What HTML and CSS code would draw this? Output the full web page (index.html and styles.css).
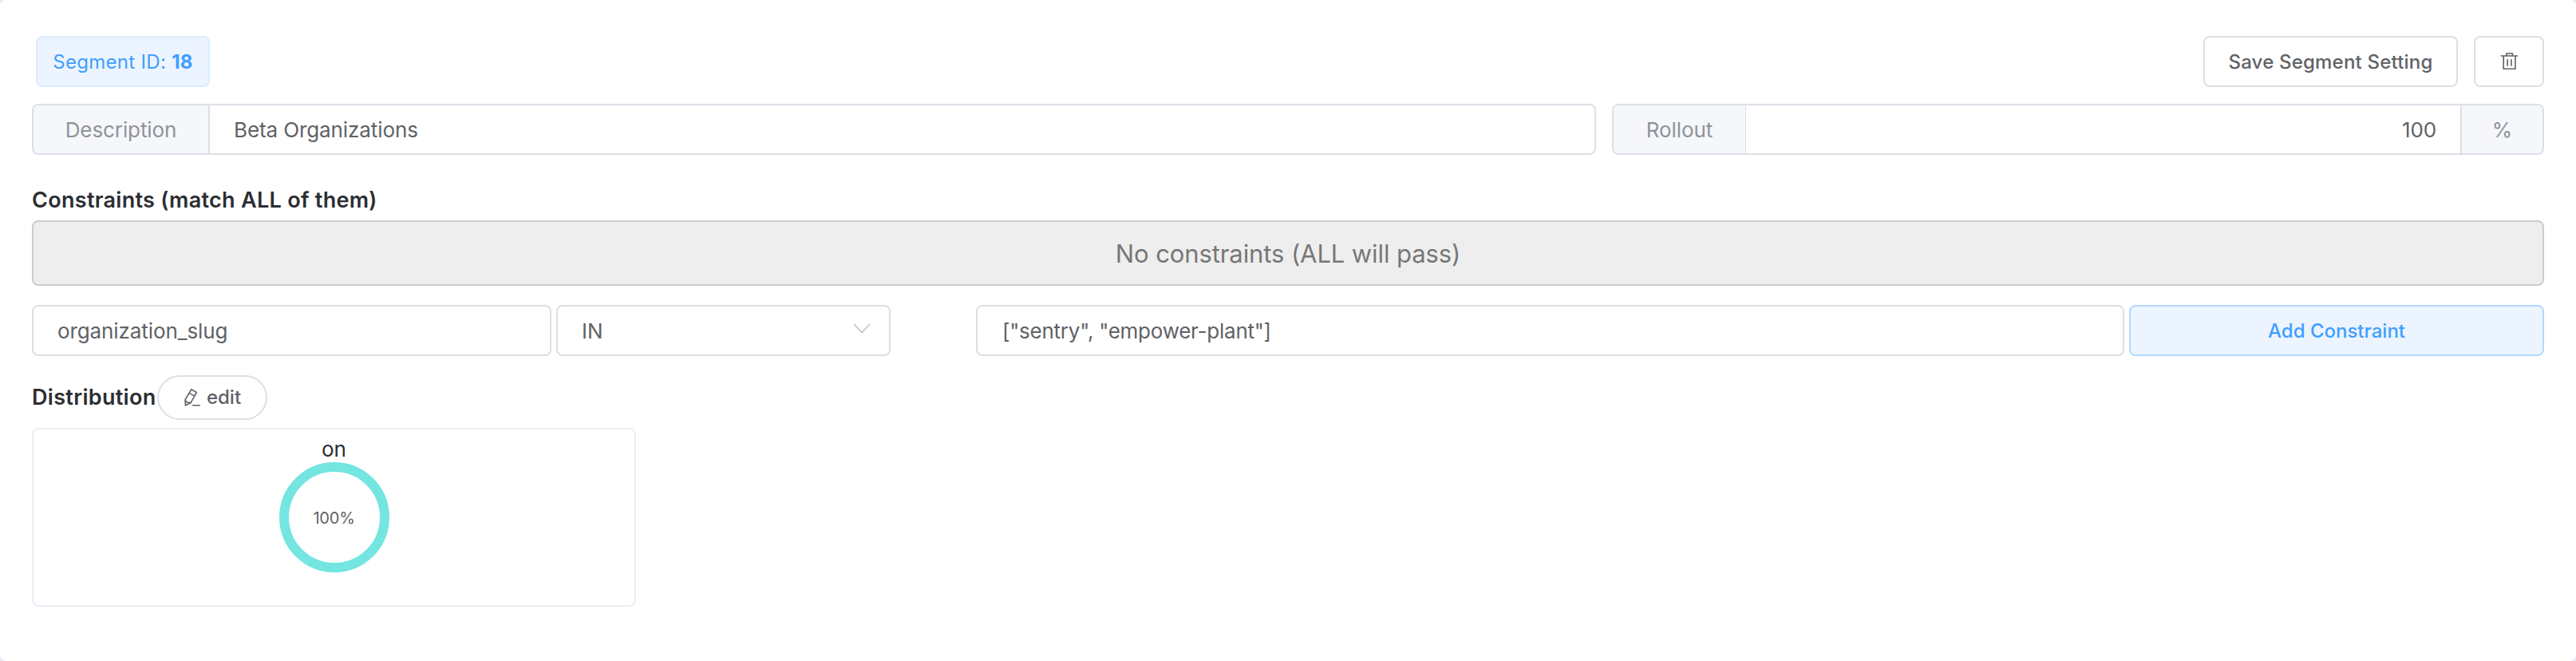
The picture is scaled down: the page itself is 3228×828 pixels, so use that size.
FILE: index.html
```html
<!DOCTYPE html>
<html lang="en">
<head>
<meta charset="utf-8">
<title>Segment</title>
<link rel="stylesheet" href="styles.css">
</head>
<body>
<main class="segment">
  <header class="segment-head">
    <span class="tag"><span>Segment ID: <b>18</b></span></span>
    <div class="actions">
      <button class="btn save">Save Segment Setting</button>
      <button class="btn remove" aria-label="Delete">
        <svg class="icon-trash" viewBox="0 0 24 24"><path d="M1.700 5h21.300M9 5V2h7.400v3M5.200 5v16.300h14.800V5M10.200 9.200v8.600M14.900 9.200v8.600"/></svg>
      </button>
    </div>
  </header>
  <section class="fields">
    <div class="group">
      <label class="addon">Description</label>
      <div class="value">Beta Organizations</div>
    </div>
    <div class="group rollout">
      <label class="addon">Rollout</label>
      <div class="value right">100</div>
      <span class="addon unit">%</span>
    </div>
  </section>
  <h5 class="heading constraints-heading">Constraints (match ALL of them)</h5>
  <div class="empty">No constraints (ALL will pass)</div>
  <section class="constraint-row">
    <div class="input">organization_slug</div>
    <div class="input select">IN
      <svg class="chevron" viewBox="0 0 22 13"><path d="M1 1l10 10.500L21 1"/></svg>
    </div>
    <div class="input property">["sentry", "empower-plant"]</div>
    <button class="btn add">Add Constraint</button>
  </section>
  <div class="distribution-head">
    <h5 class="heading">Distribution</h5>
    <button class="btn edit">
      <svg class="icon-edit" viewBox="0 0 22 24"><path d="M9.800 1.800l6.500 3.700L9 18.600l-6.500 3.200L2 14.800zM7.300 6.400l6.500 3.700M2 15.200l2.500 2.800 4.500.6M11 21.800h9.700"/></svg>
      <span>edit</span>
    </button>
  </div>
  <article class="card">
    <span>on</span>
    <div class="ring">100%</div>
  </article>
</main>
</body>
</html>
```
FILE: styles.css
```css
* { box-sizing: border-box; }
body {
  margin: 0;
  background: #e9ebf5;
  font-family: Inter, "Liberation Sans", sans-serif;
  font-size: 26px;
  line-height: 32px;
  color: #2c2e33;
}
.segment {
  height: 828px;
  padding: 45px 40px 0;
  background: #fff;
  border-radius: 8px;
}
.segment-head { display: flex; justify-content: space-between; height: 64px; padding-left: 5px; }
.tag {
  display: flex; align-items: center; justify-content: center;
  width: 218px; padding-top: 2px; border: 2px solid #d9ecff; border-radius: 8px;
  background: #ecf4ff; color: #409eff; font-size: 24px; letter-spacing: 0.3px;
}
.actions { display: flex; gap: 20px; }
.btn {
  display: flex; align-items: center; justify-content: center;
  padding: 2px 0 0; border: 2px solid #dcdfe6; border-radius: 8px;
  background: #fff; color: #606266;
  font-family: inherit; font-size: 24px; font-weight: 500; line-height: 32px;
}
.save { width: 319px; letter-spacing: 0.2px; }
.remove { width: 88px; padding: 0; }
svg { fill: none; stroke: currentColor; }
.icon-trash { width: 24px; height: 24px; stroke-width: 1.6; }
.fields { display: grid; grid-template-columns: 1960px 1168px; gap: 20px; margin-top: 21px; }
.group { display: flex; height: 64px; border: 2px solid #dcdfe6; border-radius: 8px; overflow: hidden; background: #fff; }
.addon {
  display: flex; align-items: center; justify-content: center;
  width: 221px; padding-top: 2px; border-right: 2px solid #dcdfe6;
  background: #f5f7fb; color: #909399; letter-spacing: -0.1px;
}
.rollout .addon { width: 166px; border-right-width: 1px; }
.rollout .unit { width: 103px; border-right: 0; border-left: 2px solid #dcdfe6; }
.value {
  display: flex; align-items: center; flex: 1;
  padding: 2px 30px 0; color: #606266; letter-spacing: -0.1px;
}
.right { justify-content: flex-end; }
.heading { margin: 0; font-size: 27px; font-weight: 600; letter-spacing: 0.3px; }
.constraints-heading { margin-top: 40px; height: 42px; line-height: 34px; }
.empty {
  display: flex; align-items: center; justify-content: center;
  height: 82px; padding-top: 2px; border: 2px solid #ccc; border-radius: 8px;
  background: #eee; color: #777; font-size: 31px; letter-spacing: -0.1px;
}
.constraint-row {
  display: grid; grid-template-columns: 651px 419px 95px 1439px 520px;
  column-gap: 6px; height: 64px; margin-top: 24px;
}
.input {
  display: flex; align-items: center;
  padding: 2px 30px 0; border: 2px solid #dcdfe6; border-radius: 8px;
  color: #606266; letter-spacing: -0.1px;
}
.select { justify-content: space-between; padding-right: 23px; }
.property { grid-column: 4; padding-left: 31px; letter-spacing: -0.25px; }
.chevron { width: 22px; height: 13px; margin-bottom: 7px; stroke: #c0c4cc; stroke-width: 1.8; }
.add { background: #ecf4ff; border-color: #b3d8ff; color: #409eff; }
.distribution-head { display: flex; align-items: center; height: 56px; margin-top: 24px; }
.distribution-head .heading { width: 157px; }
.edit { width: 138px; height: 56px; padding: 0; border-radius: 28px; gap: 7px; }
.icon-edit { width: 22px; height: 24px; stroke-width: 1.6; }
.card {
  display: flex; flex-direction: column; align-items: center;
  width: 757px; height: 224px; margin-top: 10px; padding-top: 9px;
  border: 2px solid #ebeef5; border-radius: 8px;
}
.ring {
  display: flex; align-items: center; justify-content: center;
  width: 138px; height: 138px; padding-top: 2px;
  border: 12px solid #74e5e0; border-radius: 50%;
  color: #606266; font-size: 20px; letter-spacing: -0.2px;
}
```
